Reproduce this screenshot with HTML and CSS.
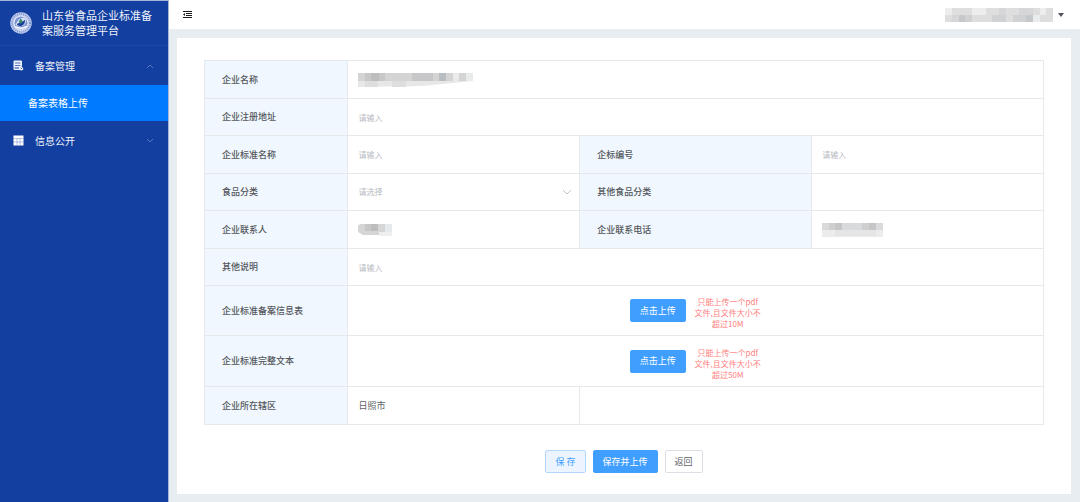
FILE: index.html
```html
<!DOCTYPE html>
<html lang="zh-CN">
<head>
<meta charset="utf-8">
<title>山东省食品企业标准备案服务管理平台</title>
<link rel="stylesheet" href="styles.css">
</head>
<body>
<div class="app">
  <aside class="sidebar">
    <div class="brand">
      <svg class="brand-logo" viewBox="0 0 42 42" aria-hidden="true">
        <circle cx="21" cy="21" r="20.500" fill="#c5d0ee"/>
        <circle cx="21" cy="21" r="17" fill="none" stroke="#7f95d2" stroke-width="4" stroke-dasharray="2 2"/>
        <circle cx="21" cy="21" r="13.500" fill="#7d95d3" stroke="#e6ebfa" stroke-width="2"/>
        <path d="M10 24c3-1 4-8 9-11 5-3 9-3 12 1 0 4-1 9-5 12-5 2-11 2-16-2z" fill="#d8e2f8"/>
        <path d="M13 24c2-3 5-4 8-4l8-5c0 6-3 11-8 12-3 0-6-1-8-3z" fill="#1b3f9c"/>
        <path d="M20 12l4 5-3 6-4-4z" fill="#2f8b67"/>
        <path d="M10 28c7 4 15 4 22-1" fill="none" stroke="#fff" stroke-width="3"/>
      </svg>
      <h1 class="brand-title">山东省食品企业标准备案服务管理平台</h1>
    </div>
    <nav class="menu">
      <button type="button" class="menu-item" aria-expanded="true">
        <svg class="menu-icon" viewBox="0 0 22 22" aria-hidden="true">
          <path d="M3 1h13a2 2 0 0 1 2 2v9l-3 3v5H3a2 2 0 0 1-2-2V3a2 2 0 0 1 2-2z" fill="#eef2fb"/>
          <path d="M4 6h11M4 11h11" stroke="#5474bd" stroke-width="2"/>
          <path d="M3 16h9" stroke="#123fa0" stroke-width="2"/>
          <path d="M17 12l4 6-3 3-5-1z" fill="#eef2fb"/>
          <circle cx="17" cy="17" r="1" fill="#123fa0"/>
        </svg>
        <span class="menu-text">备案管理</span>
        <svg class="menu-arrow" viewBox="0 0 8 8" aria-hidden="true"><path d="M1 6l3-3 3 3"/></svg>
      </button>
      <a class="menu-sub" href="#" aria-current="page">备案表格上传</a>
      <button type="button" class="menu-item" aria-expanded="false">
        <svg class="menu-icon" viewBox="0 0 22 22" aria-hidden="true">
          <path d="M1 1h20v20H1z" fill="#fff"/>
          <path d="M1 7h20M1 14h20M8 7v14M14 7v14" stroke="#7f98d0" stroke-width="1.200"/>
        </svg>
        <span class="menu-text">信息公开</span>
        <svg class="menu-arrow" viewBox="0 0 8 8" aria-hidden="true"><path d="M1 2l3 3 3-3"/></svg>
      </button>
    </nav>
  </aside>

  <div class="main">
    <header class="topbar">
      <button type="button" class="icon-button" aria-label="收起菜单">
        <svg class="fold-icon" viewBox="0 0 9 7" aria-hidden="true">
          <path d="M0 .500h9M3 2.500h6M3 4.500h6M0 6.500h9" stroke="#1c1c1c"/>
          <path d="M0 3.500l2-1.500v3z" fill="#1c1c1c"/>
        </svg>
      </button>
      <button type="button" class="icon-button user" aria-label="用户菜单">
        <svg class="mosaic-user" viewBox="0 0 16 2" preserveAspectRatio="none" shape-rendering="crispEdges" aria-hidden="true">
          <path d="M0 0h16v2H0z" fill="#dedede"/>
          <path d="M0 0h1v1H0zM4 0h2v1H4zM14 0h1v1h-1z" fill="#ededee"/>
          <path d="M8 0h1v1H8zM11 0h2v1h-2zM1 1h1v1H1z" fill="#d6d6d8"/>
          <path d="M2 1h1v1H2zM12 1h1v1h-1z" fill="#c6c9cc"/>
          <path d="M3 1h1v1H3zM7 1h2v1H7zM10 1h2v1h-2z" fill="#d0d1d2"/>
          <path d="M13 1h1v1h-1z" fill="#e9eded"/>
        </svg>
        <svg class="caret" viewBox="0 0 6 4" aria-hidden="true"><path d="M0 0h6L3 4z" fill="#50545c"/></svg>
      </button>
    </header>

    <main class="content">
      <form class="card">
        <table class="form-table">
          <colgroup><col class="col-label"><col class="col-field"><col class="col-field"><col class="col-field"></colgroup>
          <tbody>
          <tr>
            <th scope="row">企业名称</th>
            <td colspan="3">
              <svg class="mosaic-name" viewBox="0 0 115 14" role="img" aria-label="企业名称">
                <path d="M0 0h115v8H0z" fill="#d4d4d5"/>
                <path d="M13 0h8v8h-8z" fill="#bfbcbd"/>
                <path d="M7 0h6v8H7zM21 0h6v8h-6zM54 0h21v8H54z" fill="#c7c6c8"/>
                <path d="M81 0h7v8h-7z" fill="#b7bdc1"/>
                <path d="M95 0h6v8h-6zM108 0h7v8h-7z" fill="#e9eaea"/>
                <path d="M0 8h115l-31 3-20 2-64 1z" fill="#e7e7e8"/>
                <path d="M7 8h13v6H7zM34 8h14v6H34z" fill="#dededf"/>
              </svg>
            </td>
          </tr>
          <tr>
            <th scope="row"><label for="address">企业注册地址</label></th>
            <td colspan="3"><input class="field" id="address" type="text" placeholder="请输入"></td>
          </tr>
          <tr>
            <th scope="row"><label for="standard">企业标准名称</label></th>
            <td><input class="field" id="standard" type="text" placeholder="请输入"></td>
            <th scope="row"><label for="code">企标编号</label></th>
            <td><input class="field" id="code" type="text" placeholder="请输入"></td>
          </tr>
          <tr>
            <th scope="row"><label for="category">食品分类</label></th>
            <td>
              <div class="select-wrap">
                <select class="field select" id="category"><option>请选择</option></select>
                <svg class="select-arrow" viewBox="0 0 8 8" aria-hidden="true"><path d="M0 2l4 4 4-4"/></svg>
              </div>
            </td>
            <th scope="row"><label for="other-category">其他食品分类</label></th>
            <td><input class="field" id="other-category" type="text"></td>
          </tr>
          <tr>
            <th scope="row">企业联系人</th>
            <td>
              <svg class="mosaic-contact" viewBox="0 0 34 12" role="img" aria-label="企业联系人">
                <path d="M2 0h32v8H21v3H5L0 8V2z" fill="#d6d6d7"/>
                <path d="M13 0h7v7h-7z" fill="#bdbcbe"/>
                <path d="M7 0h6v7H7z" fill="#c8c7c8"/>
                <path d="M27 0h7v8h-7z" fill="#e5e9ed"/>
                <path d="M21 8h6v4h-6zM27 8h7v4h-7z" fill="#eeefef"/>
              </svg>
            </td>
            <th scope="row">企业联系电话</th>
            <td>
              <svg class="mosaic-phone" viewBox="0 0 61 14" role="img" aria-label="企业联系电话">
                <path d="M0 0h61v7H0z" fill="#d9dadb"/>
                <path d="M13 0h7v7h-7zM47 0h7v7h-7z" fill="#c6c6c8"/>
                <path d="M7 0h6v7H7zM40 0h7v7h-7z" fill="#cfcfd0"/>
                <path d="M0 7h61v7H0z" fill="#ececec"/>
                <path d="M13 7h41v6H13z" fill="#e4e5e5"/>
              </svg>
            </td>
          </tr>
          <tr>
            <th scope="row"><label for="remark">其他说明</label></th>
            <td colspan="3"><input class="field" id="remark" type="text" placeholder="请输入"></td>
          </tr>
          <tr class="upload-row">
            <th scope="row">企业标准备案信息表</th>
            <td colspan="3">
              <div class="upload">
                <button type="button" class="btn btn-primary">点击上传</button>
                <p class="hint">只能上传一个pdf文件,且文件大小不超过10M</p>
              </div>
            </td>
          </tr>
          <tr class="upload-row">
            <th scope="row">企业标准完整文本</th>
            <td colspan="3">
              <div class="upload">
                <button type="button" class="btn btn-primary">点击上传</button>
                <p class="hint">只能上传一个pdf文件,且文件大小不超过50M</p>
              </div>
            </td>
          </tr>
          <tr>
            <th scope="row">企业所在辖区</th>
            <td>日照市</td>
            <td colspan="2"></td>
          </tr>
          </tbody>
        </table>
        <div class="actions">
          <button type="button" class="btn btn-light">保 存</button>
          <button type="button" class="btn btn-primary">保存并上传</button>
          <button type="button" class="btn">返回</button>
        </div>
      </form>
    </main>
  </div>
</div>
</body>
</html>
```

FILE: styles.css
```css
* {
  box-sizing: border-box;
}

body {
  margin: 0;
  font-family: "Noto Sans CJK SC", sans-serif;
  font-size: 9px;
  line-height: 12px;
  color: #606266;
  background: #e7edf1;
}

button,
input,
select {
  font: inherit;
  color: inherit;
}

button {
  cursor: pointer;
}

svg {
  display: block;
}

.app {
  display: flex;
  min-height: 100vh;
}

/* Sidebar */
.sidebar {
  flex: 0 0 169px;
  background: #123fa0;
  border-top: 1px solid #a5b6dc;
  border-right: 1px solid #a5b6dc;
  color: #eef2fb;
}

.brand {
  display: flex;
  align-items: center;
  gap: 10px;
  height: 45px;
  padding: 0 10px;
  border-bottom: 1px solid #174aa9;
}

.brand-logo {
  flex: none;
  width: 22px;
  height: 22px;
}

.brand-title {
  flex: none;
  width: 116px;
  margin: 0;
  font-size: 11px;
  font-weight: 400;
  line-height: 15px;
}

.menu-item {
  display: flex;
  align-items: center;
  width: 100%;
  height: 39px;
  padding: 0 14px 0 13px;
  border: 0;
  background: none;
  font-size: 10px;
  text-align: left;
}

.menu-icon {
  width: 11px;
  height: 11px;
}

.menu-text {
  flex: 1;
  margin-left: 11px;
}

.menu-arrow {
  width: 8px;
  height: 8px;
  fill: none;
  stroke: #5877bd;
}

.menu-sub {
  display: flex;
  align-items: center;
  height: 36px;
  padding-left: 28px;
  background: #007aff;
  color: #fff;
  font-size: 10px;
  text-decoration: none;
}

/* Top bar */
.main {
  display: flex;
  flex: 1;
  flex-direction: column;
  min-width: 0;
}

.topbar {
  display: flex;
  align-items: center;
  justify-content: space-between;
  height: 29px;
  padding: 0 16px 0 14px;
  background: #fff;
}

.icon-button {
  display: flex;
  align-items: center;
  padding: 0;
  border: 0;
  background: none;
}

.fold-icon {
  width: 9px;
  height: 7px;
}

.user {
  gap: 5px;
}

.mosaic-user {
  width: 108px;
  height: 14px;
}

.caret {
  width: 6px;
  height: 4px;
}

/* Form card */
.content {
  flex: 1;
  padding: 9px 9px 8px 8px;
}

.card {
  padding: 22px 27px 21px;
  background: #fff;
}

.form-table {
  width: 100%;
  border-collapse: collapse;
  table-layout: fixed;
  border: 1px solid #e6e8ea;
}

.col-label {
  width: 17.1%;
}

.form-table tr {
  height: 38px;
}

.form-table tr:nth-child(even) {
  height: 37px;
}

.form-table .upload-row {
  height: 50px;
}

.form-table .upload-row:nth-child(even) {
  height: 51px;
}

.form-table th,
.form-table td {
  padding: 0 8px 0 10px;
  border: 1px solid #e6e8ea;
  text-align: left;
}

.form-table th {
  padding-left: 17px;
  background: #f0f7ff;
  color: #55585c;
  font-weight: 500;
}

.field {
  display: block;
  width: 100%;
  height: 24px;
  padding: 0;
  border: 0;
  outline: 0;
  background: none;
  font-size: 8px;
}

.field::placeholder {
  color: #b8bbc1;
  opacity: 1;
}

.select-wrap {
  display: grid;
  grid-template-columns: 1fr 8px;
  align-items: center;
}

.select {
  appearance: none;
  grid-area: 1 / 1 / 2 / 3;
  color: #b8bbc1;
}

.select-arrow {
  grid-area: 1 / 2;
  width: 8px;
  height: 8px;
  fill: none;
  stroke: #c0c4cc;
  pointer-events: none;
}

.mosaic-name {
  width: 115px;
  height: 14px;
}

.mosaic-contact {
  width: 34px;
  height: 12px;
}

.mosaic-phone {
  width: 61px;
  height: 14px;
}

.upload {
  display: flex;
  align-items: center;
  justify-content: center;
  gap: 6px;
}

.hint {
  width: 72px;
  margin: 0;
  padding: 4px 2px 0;
  color: #ff7d7d;
  font-size: 8px;
  line-height: 11px;
  text-align: center;
}

.btn {
  height: 23px;
  padding: 0 9px;
  border: 1px solid #dcdfe6;
  border-radius: 2px;
  background: #fff;
  white-space: nowrap;
}

.btn-primary {
  border-color: #409eff;
  background: #409eff;
  color: #fff;
}

.btn-light {
  border-color: #b3d8ff;
  background: #ecf5ff;
  color: #409eff;
}

.actions {
  display: flex;
  justify-content: center;
  gap: 7px;
  margin-top: 25px;
}
```
